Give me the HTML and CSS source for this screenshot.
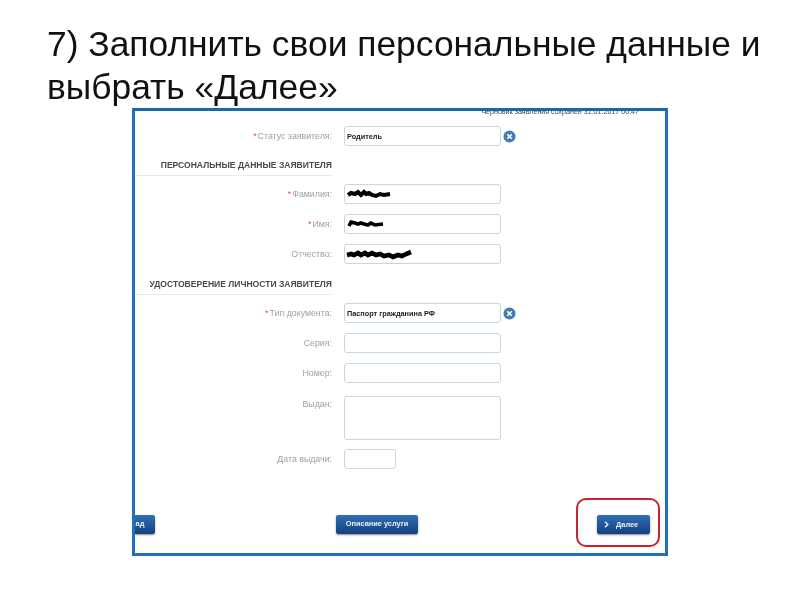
FILE: index.html
```html
<!DOCTYPE html>
<html lang="ru">
<head>
    <meta charset="UTF-8">
    <title>Заполнить персональные данные</title>
    <link rel="stylesheet" href="styles.css">
</head>
<body>
    <h1 class="slide-title">7) Заполнить свои персональные данные и выбрать «Далее»</h1>

    <div class="shot">
        <div class="shot-inner">
            <div class="draft-note">Черновик заявления сохранен 31.01.2017 00:47</div>

            <div class="row row-first">
                <div class="label"><span class="req">*</span>Статус заявителя:</div>
                <div class="field field-value">Родитель</div>
                <svg class="clear" viewBox="0 0 14 14"><circle cx="7" cy="7" r="6.5" fill="#3f7cb8"/><path d="M4.6 4.6l4.8 4.8M9.4 4.6l-4.8 4.8" stroke="#fff" stroke-width="1.8"/></svg>
            </div>

            <div class="section">Персональные данные заявителя</div>

            <div class="row row-after-section">
                <div class="label"><span class="req">*</span>Фамилия:</div>
                <div class="field">
                    <svg class="scribble" width="46" height="14" viewBox="0 0 46 14"><path d="M2 8l3-2 4 1 3-2 3 3 3-3 2 2 3-1 3 2 4 1 4-2 4 1 6-1" fill="none" stroke="#000" stroke-width="4"/></svg>
                </div>
            </div>
            <div class="row">
                <div class="label"><span class="req">*</span>Имя:</div>
                <div class="field">
                    <svg class="scribble" width="38" height="14" viewBox="0 0 38 14"><path d="M3 9l2-4 4 1 3 1 3-1 3 1 4 1 3-2 4 2 8-1" fill="none" stroke="#000" stroke-width="3.6"/></svg>
                </div>
            </div>
            <div class="row">
                <div class="label">Отчество:</div>
                <div class="field">
                    <svg class="scribble" width="71" height="14" viewBox="0 0 71 14"><path d="M1 8l4-1 3 1 4-2 3 2 4-2 3 2 4-2 4 2 4-1 4 2 5-1 4 2 5-2 4 1 4-2 5-2" fill="none" stroke="#000" stroke-width="4.6"/></svg>
                </div>
            </div>

            <div class="section section-two">Удостоверение личности заявителя</div>

            <div class="row row-after-section">
                <div class="label"><span class="req">*</span>Тип документа:</div>
                <div class="field field-value">Паспорт гражданина РФ</div>
                <svg class="clear" viewBox="0 0 14 14"><circle cx="7" cy="7" r="6.5" fill="#3f7cb8"/><path d="M4.6 4.6l4.8 4.8M9.4 4.6l-4.8 4.8" stroke="#fff" stroke-width="1.8"/></svg>
            </div>
            <div class="row">
                <div class="label">Серия:</div>
                <div class="field"></div>
            </div>
            <div class="row">
                <div class="label">Номер:</div>
                <div class="field"></div>
            </div>
            <div class="row row-tall">
                <div class="label">Выдан:</div>
                <div class="field field-area"></div>
            </div>
            <div class="row row-date">
                <div class="label">Дата выдачи:</div>
                <div class="field field-date"></div>
            </div>

            <div class="buttons">
                <div class="btn btn-back">ад</div>
                <div class="btn btn-info">Описание услуги</div>
                <div class="btn btn-next">
                    <svg class="chevron" width="5" height="7" viewBox="0 0 5 7"><path d="M1 .8L3.8 3.5 1 6.2" fill="none" stroke="#e8f0f8" stroke-width="1.4"/></svg>
                    Далее
                </div>
            </div>
        </div>
        <div class="highlight"></div>
    </div>
</body>
</html>
```

FILE: styles.css
```css
body {
    margin: 0;
    background-color: #fff;
    font-family: "Liberation Sans", Arial, sans-serif;
}

.slide-title {
    margin: 0 0 -1px;
    padding: 23px 20px 0 47px;
    font-size: 35.4px;
    font-weight: normal;
    line-height: 43px;
    color: #111;
    filter: blur(0.3px);
}

.shot {
    position: relative;
    box-sizing: border-box;
    width: 536px;
    height: 448px;
    margin-left: 132px;
    border: 3px solid #1f72b8;
    border-top-color: #1a68a8;
    overflow: hidden;
}

.shot-inner {
    height: 100%;
    filter: blur(0.7px);
}

.draft-note {
    height: 8px;
    margin-top: -4px;
    padding-right: 26px;
    font-size: 7.1px;
    line-height: 10px;
    text-align: right;
    color: #444;
}

.row {
    display: flex;
    height: 20px;
    margin-top: 10px;
}

.row-first {
    margin-top: 11px;
}

.row-after-section {
    margin-top: 8px;
}

.row-tall {
    height: 44px;
    margin-top: 13px;
}

.row-tall .label {
    line-height: 16px;
}

.row-date {
    margin-top: 9px;
}

.label {
    width: 197px;
    font-size: 8.8px;
    line-height: 20px;
    text-align: right;
    color: #a0a0a0;
}

.req {
    margin-right: 1px;
    color: #d9534f;
}

.field {
    box-sizing: border-box;
    display: flex;
    align-items: center;
    width: 157px;
    margin-left: 12px;
    padding-left: 1px;
    border: 1px solid #c6d6e4;
    border-radius: 3px;
    background-color: #fff;
}

.field-value {
    padding-left: 2px;
    font-size: 7.3px;
    font-weight: bold;
    color: #222;
}

.field-area {
    height: 44px;
}

.field-date {
    width: 52px;
}

.scribble {
    display: block;
}

.clear {
    width: 13px;
    height: 13px;
    margin: 4px 0 0 2px;
}

.section {
    box-sizing: border-box;
    width: 197px;
    height: 20px;
    margin-top: 10px;
    border-bottom: 1px solid #e4ebee;
    font-size: 8.55px;
    font-weight: bold;
    line-height: 19px;
    text-align: right;
    text-transform: uppercase;
    white-space: nowrap;
    color: #4a4a4a;
}

.section-two {
    margin-top: 11px;
}

.buttons {
    display: flex;
    height: 19px;
    margin-top: 46px;
}

.btn {
    box-sizing: border-box;
    height: 19px;
    border-radius: 2px;
    background: linear-gradient(#3270b5, #143f7f);
    box-shadow: 0 1px 2px rgba(0, 0, 0, 0.45);
    font-size: 7.4px;
    font-weight: bold;
    line-height: 18px;
    text-align: center;
    white-space: nowrap;
    color: #e8f0f8;
}

.btn-back {
    width: 20px;
    border-radius: 0 2px 2px 0;
    padding-right: 10px;
}

.btn-info {
    width: 82px;
    margin-left: 181px;
}

.btn-next {
    display: flex;
    align-items: center;
    gap: 7px;
    width: 53px;
    margin-left: 179px;
    padding-left: 7px;
}

.highlight {
    position: absolute;
    left: 441px;
    top: 387px;
    width: 80px;
    height: 45px;
    border: 2px solid #c8232f;
    border-radius: 10px;
    filter: blur(0.4px);
}
```
